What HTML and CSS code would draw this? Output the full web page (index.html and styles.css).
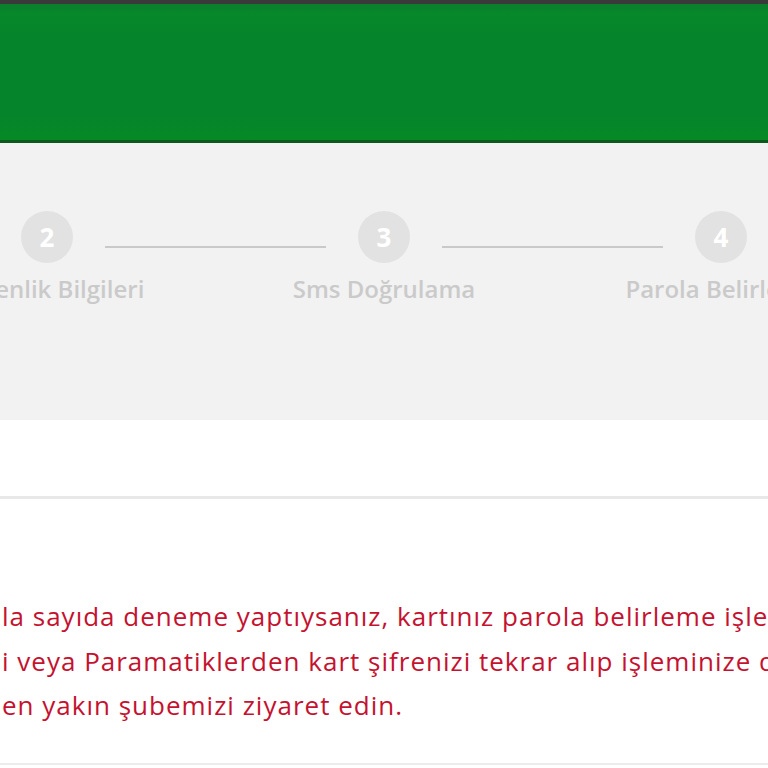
FILE: index.html
```html
<!DOCTYPE html>
<html lang="tr">

<head>
    <meta charset="UTF-8">
    <meta name="viewport" content="width=device-width, initial-scale=1.0">
    <title>Parola Belirleme</title>
    <link rel="stylesheet" href="styles.css">
</head>

<body>

    <div class="topbar"></div>
    <header class="header"></header>

    <section class="steps">
        <div class="steps-track">
            <div class="step">
                <span class="step-num">1</span>
                <span class="step-label">Kart Bilgileri</span>
            </div>
            <div class="step-line"></div>
            <div class="step">
                <span class="step-num">2</span>
                <span class="step-label">Güvenlik Bilgileri</span>
            </div>
            <div class="step-line"></div>
            <div class="step">
                <span class="step-num">3</span>
                <span class="step-label">Sms Doğrulama</span>
            </div>
            <div class="step-line"></div>
            <div class="step">
                <span class="step-num">4</span>
                <span class="step-label">Parola Belirleme</span>
            </div>
        </div>
    </section>

    <div class="spacer"></div>

    <main class="content">
        <p class="warning">
            <span>la sayıda deneme yaptıysanız, kartınız parola belirleme işlemine kapatılmış olabilir.</span>
            <span>i veya Paramatiklerden kart şifrenizi tekrar alıp işleminize devam edebilirsiniz</span>
            <span>en yakın şubemizi ziyaret edin.</span>
        </p>
    </main>

</body>

</html>
```

FILE: styles.css
```css
body {
    margin: 0;
    font-family: "Open Sans", "Noto Sans", sans-serif;
    background-color: #ffffff;
    overflow: hidden;
    height: 768px;
}

.topbar {
    height: 4px;
    background-color: #3a3a3a;
}

.header {
    height: 136px;
    background: linear-gradient(#0b7f2c, #06892a 8%, #06842b 22%, #06842b 82%, #058a25);
    border-bottom: 3px solid #0b5a1c;
}

.steps {
    height: 277px;
    background-color: #f2f2f2;
    overflow: hidden;
}

.steps-track {
    display: flex;
    align-items: flex-start;
    margin-left: -348px;
    padding-top: 68px;
}

.step {
    width: 116px;
    flex: none;
    display: flex;
    flex-direction: column;
    align-items: center;
}

.step-num {
    width: 52px;
    height: 52px;
    border-radius: 50%;
    background-color: #e2e2e2;
    color: #ffffff;
    font-weight: 700;
    font-size: 26px;
    line-height: 52px;
    text-align: center;
}

.step-label {
    white-space: nowrap;
    margin-top: 9px;
    font-size: 24px;
    font-weight: 600;
    color: #cacaca;
}

.step-line {
    width: 221px;
    flex: none;
    height: 2px;
    margin-top: 35px;
    background-color: #c9c9c9;
}

.spacer {
    height: 76px;
    border-bottom: 3px solid #e8e8e8;
}

.content {
    padding-top: 95px;
    height: 169px;
    border-bottom: 2px solid #ececec;
}

.warning {
    margin: 0;
    color: #c4122f;
    font-size: 26px;
    line-height: 44.5px;
    letter-spacing: 1px;
    white-space: nowrap;
}

.warning span {
    display: block;
    margin-left: 2px;
}
```
